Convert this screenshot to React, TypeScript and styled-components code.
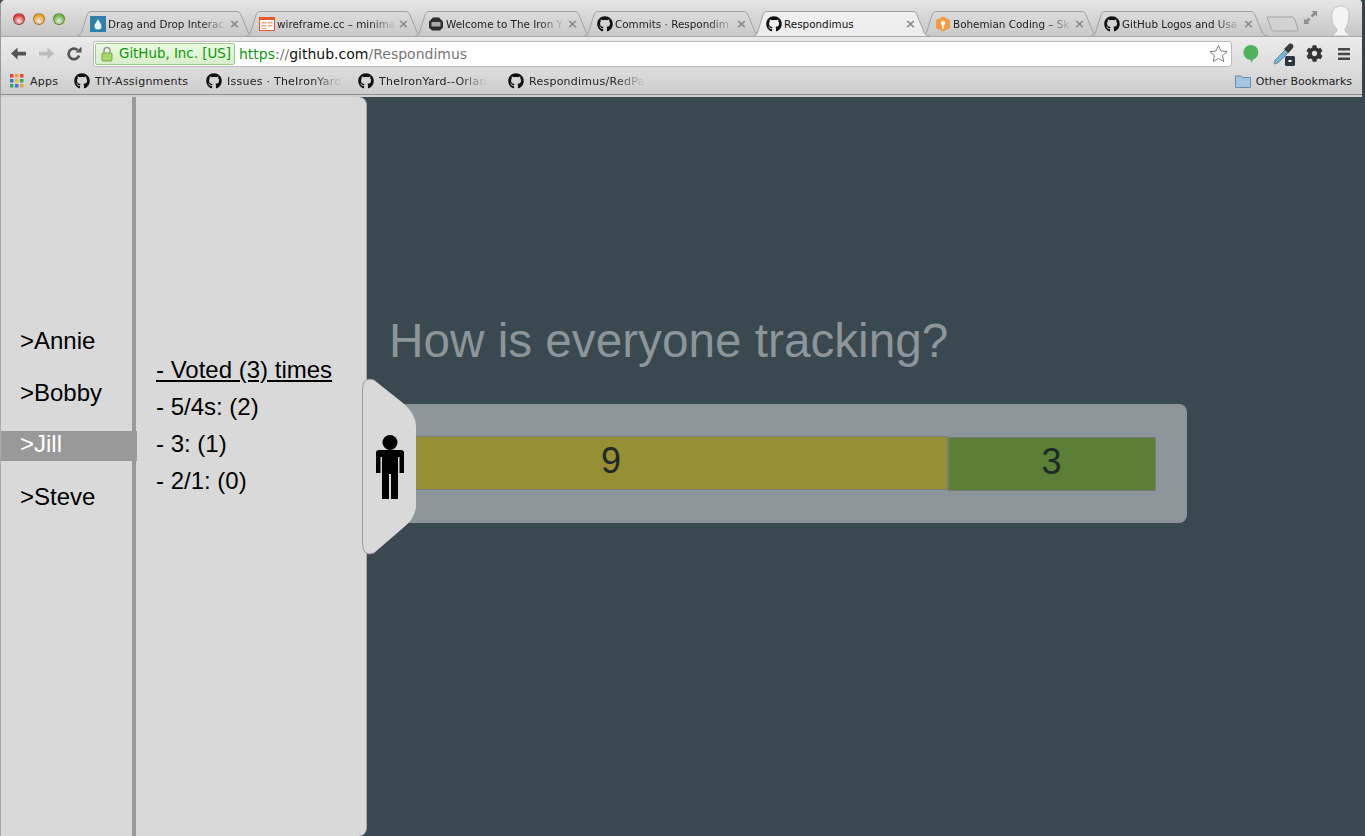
import React from 'react';
import styled, { createGlobalStyle } from 'styled-components';
import { FaGithub, FaCog } from 'react-icons/fa';

const GlobalStyle = createGlobalStyle`
  html, body {
    margin: 0;
    padding: 0;
    height: 100%;
    background: #3a4850;
    overflow: hidden;
  }
  * {
    box-sizing: border-box;
  }
`;

const Window = styled.div`
  width: 1365px;
  height: 836px;
  display: flex;
  flex-direction: column;
  overflow: hidden;
`;

const Browser = styled.header`
  height: 97px;
  flex: none;
  font-family: 'DejaVu Sans', sans-serif;
  font-size: 11px;
  color: #222;
  background: #d4d4d4;
  border-right: 3px solid #3a4048;
  border-left: 1px solid #9a9a9a;
  border-top-left-radius: 5px;
  border-top-right-radius: 5px;
`;

const TabStrip = styled.div`
  height: 36px;
  display: flex;
  align-items: flex-end;
  padding-left: 75px;
  background: linear-gradient(#e6e6e6, #c6c6c6);
  border-top-left-radius: 5px;
  border-top-right-radius: 5px;
  position: relative;
`;

const Lights = styled.div`
  position: absolute;
  left: 12px;
  top: 13px;
  display: flex;
  gap: 8px;
`;

const Light = styled.span<{ $color: string }>`
  width: 12px;
  height: 12px;
  border-radius: 50%;
  border: 1px solid rgba(0, 0, 0, 0.28);
  background: radial-gradient(circle at 50% 70%, #fff8 0, ${p => p.$color} 65%);
`;

const TabItem = styled.div<{ $active?: boolean }>`
  position: relative;
  width: 179px;
  height: 25px;
  margin-right: -10px;
  padding: 0 28px 0 14px;
  display: flex;
  align-items: center;
  gap: 2px;
  white-space: nowrap;
  font-size: 10.4px;
  z-index: ${p => (p.$active ? 3 : 1)};
  color: ${p => (p.$active ? '#111' : '#222')};
`;

const TabShape = styled.svg`
  position: absolute;
  inset: 0;
  width: 100%;
  height: 100%;
`;

const TabLabel = styled.span<{ $fade?: boolean }>`
  position: relative;
  flex: 1;
  padding-top: 1px;
  ${p =>
    p.$fade &&
    'mask-image: linear-gradient(to right, #000 78%, transparent 100%);'}
`;

const TabClose = styled.span`
  position: absolute;
  right: 15px;
  top: 5px;
  font-size: 13px;
  font-weight: 700;
  color: #8a8a8a;
`;

const IconSlot = styled.span`
  position: relative;
  width: 16px;
  height: 16px;
  flex: none;
  display: flex;
  font-size: 16px;
  color: #111;
`;

const NewTab = styled.svg`
  width: 33px;
  height: 16px;
  margin-left: 7px;
  margin-bottom: 4px;
  flex: none;
`;

const WindowExtras = styled.div`
  position: absolute;
  right: 10px;
  top: 5px;
  display: flex;
  align-items: flex-start;
  gap: 10px;
`;

const Toolbar = styled.div`
  height: 32px;
  display: flex;
  align-items: center;
  padding: 2px 0 0 7px;
  background: linear-gradient(#ebebeb, #dddddd);
  border-top: 1px solid #a8a8a8;
`;

const NavButton = styled.span`
  width: 20px;
  height: 20px;
  margin-right: 8px;
  display: flex;
  align-items: center;
  justify-content: center;
`;

const Omnibox = styled.div`
  width: 1139px;
  height: 26px;
  margin-left: 1px;
  display: flex;
  align-items: center;
  padding: 1px;
  background: #fff;
  border: 1px solid #bcbcbc;
  border-radius: 3px;
  font-size: 14px;
`;

const SecureChip = styled.div`
  width: 140px;
  height: 22px;
  flex: none;
  display: flex;
  align-items: center;
  gap: 6px;
  padding-left: 5px;
  font-size: 13.4px;
  white-space: nowrap;
  color: #0a9a0a;
  background: linear-gradient(#ecf8e4, #d8efca);
  border: 1px solid #9ccc88;
  border-radius: 2px;
`;

const Url = styled.div`
  flex: 1;
  padding-left: 4px;
  white-space: nowrap;
  color: #777;
`;

const UrlScheme = styled.span`
  color: #0a9a0a;
`;

const UrlHost = styled.span`
  color: #111;
`;

const ToolIcons = styled.div`
  display: flex;
  align-items: center;
  padding-left: 9px;
  gap: 10px;
`;

const ToolIcon = styled.span<{ $spaced?: boolean }>`
  width: 20px;
  height: 22px;
  margin-right: ${p => (p.$spaced ? '3px' : '0')};
  display: flex;
  align-items: center;
  justify-content: center;
  color: #333;
  font-size: 16px;
`;

const Bookmarks = styled.div`
  height: 27px;
  display: flex;
  align-items: center;
  padding-left: 9px;
  background: linear-gradient(#dddddd, #cdcdcd);
  border-bottom: 1px solid #8f8f8f;
  box-shadow: 0 2px 0 #d0d0d0;
`;

const Bookmark = styled.div<{ $width: number; $gap?: number }>`
  width: ${p => p.$width}px;
  flex: none;
  display: flex;
  align-items: center;
  gap: ${p => p.$gap ?? 5}px;
  white-space: nowrap;
`;

const BookmarkLabel = styled.span<{ $fade?: boolean }>`
  flex: none;
  letter-spacing: 0.25px;
  ${p =>
    p.$fade &&
    'mask-image: linear-gradient(to right, #000 75%, transparent 100%);'}
`;

const BookmarkSpacer = styled.div`
  flex: 1;
`;

const OtherBookmarks = styled.div`
  display: flex;
  align-items: center;
  gap: 5px;
  padding-right: 10px;
  white-space: nowrap;
`;

const Page = styled.main`
  flex: 1;
  display: flex;
  background: #3a4850;
  font-family: 'Liberation Sans', Arial, sans-serif;
  min-height: 0;
`;

const PeopleColumn = styled.nav`
  width: 136px;
  flex: none;
  padding-top: 230px;
  background: #d9d9d9;
  border-right: 4px solid #999;
  border-left: 1px solid #aaa;
  position: relative;
  z-index: 3;
`;

const Person = styled.div<{ $selected?: boolean }>`
  height: 30px;
  width: ${p => (p.$selected ? '136px' : 'auto')};
  margin-bottom: 22px;
  padding-left: 19px;
  font-size: 24px;
  line-height: ${p => (p.$selected ? '26px' : '28px')};
  color: ${p => (p.$selected ? '#fff' : '#000')};
  background: ${p => (p.$selected ? '#999' : 'transparent')};
`;

const DetailColumn = styled.section`
  position: relative;
  width: 231px;
  flex: none;
  padding: 254px 0 0 20px;
  background: #d9d9d9;
  border-right: 1px solid #aaa;
  border-radius: 0 8px 8px 0;
  z-index: 2;
`;

const DetailLine = styled.div<{ $head?: boolean }>`
  font-size: 24px;
  line-height: 37px;
  color: #000;
  text-decoration: ${p => (p.$head ? 'underline' : 'none')};
`;

const Handle = styled.svg`
  position: absolute;
  top: 281px;
  left: 226px;
  width: 55px;
  height: 178px;
`;

const Content = styled.div`
  flex: 1;
  padding: 217px 0 0 22px;
  min-width: 0;
`;

const Question = styled.h1`
  margin: 0 0 36px;
  font-size: 47.7px;
  line-height: 54px;
  font-weight: 400;
  color: #8c9599;
  white-space: nowrap;
`;

const ChartCard = styled.div`
  width: 913px;
  height: 119px;
  margin-left: -115px;
  padding: 33px 0 0 1px;
  display: flex;
  align-items: flex-start;
  background: #8c9599;
  border-radius: 8px;
`;

const Segment = styled.div<{ $color: string; $width: number; $raised?: boolean }>`
  width: ${p => p.$width}px;
  height: 54px;
  margin-top: ${p => (p.$raised ? '-1px' : '0')};
  padding: 0 1px 5px 0;
  display: flex;
  align-items: center;
  justify-content: center;
  font-size: 36px;
  color: #20282c;
  background: ${p => p.$color};
  border: 1px solid #767d74;
`;

const tabs = [
  { title: 'Drag and Drop Interac', icon: 'drop' },
  { title: 'wireframe.cc – minima', icon: 'wire' },
  { title: 'Welcome to The Iron Y', icon: 'iron' },
  { title: 'Commits · Respondim', icon: 'github' },
  { title: 'Respondimus', icon: 'github', active: true },
  { title: 'Bohemian Coding – Sk', icon: 'bohemian' },
  { title: 'GitHub Logos and Usa', icon: 'github' },
];

const bookmarks = [
  { title: 'TIY-Assignments', width: 132 },
  { title: 'Issues · TheIronYard', width: 152, fade: true },
  { title: 'TheIronYard--Orlan', width: 150, fade: true },
  { title: 'Respondimus/RedPa', width: 150, fade: true },
];

const people = ['Annie', 'Bobby', 'Jill', 'Steve'];

const Favicon: React.FC<{ kind: string }> = ({ kind }) => {
  if (kind === 'github') return <FaGithub />;
  if (kind === 'drop') {
    return (
      <svg viewBox="0 0 16 16" width="16" height="16">
        <rect width="16" height="16" fill="#2f7fa8" />
        <path d="M8 3 C9 6 11.5 7.5 11.5 10 A3.5 3.5 0 0 1 4.5 10 C4.5 7.5 7 6 8 3Z" fill="#e8f4fa" />
      </svg>
    );
  }
  if (kind === 'wire') {
    return (
      <svg viewBox="0 0 16 16" width="16" height="16">
        <rect x="0.5" y="1.5" width="15" height="13" fill="#fff" stroke="#e8562a" />
        <rect x="1" y="2" width="14" height="2" fill="#e8562a" />
        <path d="M2.5 6h5v1.5h-5zM2.5 9h5v1.5h-5zM2.5 12h5v1h-5zM9 6h4.5v1.5H9zM9 9h4.5v1.5H9z" fill="#f3a184" />
      </svg>
    );
  }
  if (kind === 'iron') {
    return (
      <svg viewBox="0 0 16 16" width="16" height="16">
        <path d="M5 1.5h6l4 4v6l-3 3H4l-3-3v-6z" fill="#2c2c2c" />
        <rect x="3.5" y="6" width="9" height="4.5" fill="#aaa" />
      </svg>
    );
  }
  return (
    <svg viewBox="0 0 16 16" width="16" height="16">
      <path d="M8 0.5 L15 4 V12 L8 15.5 L1 12 V4Z" fill="#f39a45" />
      <circle cx="8" cy="7" r="2.2" fill="#fff" />
      <rect x="7.2" y="8" width="1.6" height="5" fill="#fff" />
    </svg>
  );
};

const Tab: React.FC<{ title: string; icon: string; active?: boolean }> = ({ title, icon, active }) => (
  <TabItem $active={active}>
    <TabShape viewBox="0 0 179 25" preserveAspectRatio="none">
      <defs>
        <linearGradient id={active ? 'tabOn' : 'tabOff'} x1="0" y1="0" x2="0" y2="1">
          <stop offset="0" stopColor={active ? '#f0f0f0' : '#dcdcdc'} />
          <stop offset="1" stopColor={active ? '#ececec' : '#c9c9c9'} />
        </linearGradient>
      </defs>
      <path
        d="M1 25 C4 25 5 23 6 20 L11 4 C12 1 13 0.5 16 0.5 H160 C163 0.5 164 1 165 4 L172 21 C173 24 175 25 178 25"
        fill={`url(#${active ? 'tabOn' : 'tabOff'})`}
        stroke="#a2a2a2"
      />
    </TabShape>
    <IconSlot>
      <Favicon kind={icon} />
    </IconSlot>
    <TabLabel $fade={!active}>{title}</TabLabel>
    <TabClose>×</TabClose>
  </TabItem>
);

const Octocat = () => (
  <IconSlot>
    <FaGithub />
  </IconSlot>
);

const App: React.FC = () => (
  <Window>
    <GlobalStyle />
    <Browser>
      <TabStrip>
        <Lights>
          <Light $color="#e2403c" />
          <Light $color="#e8a22c" />
          <Light $color="#6fb844" />
        </Lights>
        {tabs.map(tab => (
          <Tab key={tab.title} {...tab} />
        ))}
        <NewTab viewBox="0 0 33 16">
          <path d="M1 1 H26 C28 1 28 2 29 4 L32 13 C32 15 31 15 29 15 H8 C6 15 6 14 5 12Z" fill="#d2d2d2" stroke="#a4a4a4" />
        </NewTab>
        <WindowExtras>
          <svg viewBox="0 0 16 16" width="15" height="15" style={{ marginTop: 5 }}>
            <path d="M9 1h6v6l-2-2-3 3-2-2 3-3zM7 15H1V9l2 2 3-3 2 2-3 3z" fill="#8d8d8d" />
          </svg>
          <svg viewBox="0 0 24 31" width="24" height="31">
            <path d="M4 31 C7 28 9 27 9 24 C5 21 3 15 4 8 C5 3 9 1 13 1 C18 1 21 4 21 9 C21 15 20 20 17 24 C17 27 19 29 23 31Z" fill="#f4f4f4" stroke="#c2c2c2" />
          </svg>
        </WindowExtras>
      </TabStrip>
      <Toolbar>
        <NavButton>
          <svg viewBox="0 0 18 16" width="17" height="15">
            <path d="M1 8 L8 1.5 V6 H17 V10 H8 V14.5Z" fill="#555" />
          </svg>
        </NavButton>
        <NavButton>
          <svg viewBox="0 0 18 16" width="17" height="15">
            <path d="M17 8 L10 1.5 V6 H1 V10 H10 V14.5Z" fill="#bcbcbc" />
          </svg>
        </NavButton>
        <NavButton>
          <svg viewBox="0 0 16 16" width="16" height="16">
            <path d="M13 9.5 A5.3 5.3 0 1 1 11.5 4" fill="none" stroke="#555" strokeWidth="2.6" />
            <path d="M9.5 6.5 H15.5 V0.5Z" fill="#555" />
          </svg>
        </NavButton>
        <Omnibox>
          <SecureChip>
            <svg viewBox="0 0 12 16" width="12" height="16">
              <path d="M3 7 V4.5 A3 3 0 0 1 9 4.5 V7" fill="none" stroke="#9a9a9a" strokeWidth="1.6" />
              <rect x="1" y="7" width="10" height="8" rx="1" fill="#a6d86e" stroke="#78a850" />
            </svg>
            GitHub, Inc. [US]
          </SecureChip>
          <Url>
            <UrlScheme>https</UrlScheme>://<UrlHost>github.com</UrlHost>/Respondimus
          </Url>
          <svg viewBox="0 0 20 20" width="19" height="19" style={{ marginRight: 2 }}>
            <path d="M10 1.5 L12.6 7.4 L19 8 L14.2 12.2 L15.6 18.5 L10 15.2 L4.4 18.5 L5.8 12.2 L1 8 L7.4 7.4Z" fill="#fff" stroke="#777" />
          </svg>
        </Omnibox>
        <ToolIcons>
          <ToolIcon $spaced>
            <svg viewBox="0 0 16 20" width="16" height="20">
              <path d="M8 1 A7.4 7.4 0 0 1 10 15.5 L8.5 19 L7.5 15.8 A7.4 7.4 0 0 1 8 1Z" fill="#4eb25f" />
            </svg>
          </ToolIcon>
          <ToolIcon>
            <svg viewBox="0 0 24 24" width="24" height="24" style={{ flex: 'none' }}>
              <path d="M2 22 L3 18 L13 8 L16 11 L6 21Z" fill="#6cb4e0" stroke="#8a8a8a" />
              <path d="M12 7 L16 3 C17 1 20 1 21 3 C22 5 21 6 20 7 L16.500 11Z" fill="#3c3c3c" />
              <rect x="13" y="14" width="10" height="10" rx="1.5" fill="#2a3640" />
              <rect x="16.500" y="18" width="3" height="2" fill="#fff" />
            </svg>
          </ToolIcon>
          <ToolIcon>
            <FaCog size={17} />
          </ToolIcon>
          <ToolIcon>
            <svg viewBox="0 0 14 14" width="14" height="14">
              <path d="M1 1h12v2.4H1zM1 5.800h12v2.400H1zM1 10.600h12V13H1z" fill="#444" />
            </svg>
          </ToolIcon>
        </ToolIcons>
      </Toolbar>
      <Bookmarks>
        <Bookmark $width={64} $gap={6}>
          <svg viewBox="0 0 14 14" width="14" height="14" style={{ flex: 'none' }}>
            <path d="M0 0h3.500v3.500H0z" fill="#e0483c" />
            <path d="M5 0h3.500v3.500H5z" fill="#e8a02c" />
            <path d="M10 0h3.500v3.500H10z" fill="#e0483c" />
            <path d="M0 5h3.500v3.500H0z" fill="#3c78d8" />
            <path d="M5 5h3.500v3.500H5z" fill="#e8c02c" />
            <path d="M10 5h3.500v3.500H10z" fill="#3aa757" />
            <path d="M0 10h3.500v3.500H0z" fill="#3aa757" />
            <path d="M5 10h3.500v3.500H5z" fill="#3c78d8" />
            <path d="M10 10h3.500v3.500H10z" fill="#e8a02c" />
          </svg>
          <BookmarkLabel>Apps</BookmarkLabel>
        </Bookmark>
        {bookmarks.map(item => (
          <Bookmark key={item.title} $width={item.width}>
            <Octocat />
            <BookmarkLabel $fade={item.fade}>{item.title}</BookmarkLabel>
          </Bookmark>
        ))}
        <BookmarkSpacer />
        <OtherBookmarks>
          <svg viewBox="0 0 16 13" width="16" height="13">
            <path d="M0.500 12.500 V1 H6 L7 2.500 H15.500 V12.500Z" fill="#a4c6e4" stroke="#6d8ea8" />
          </svg>
          Other Bookmarks
        </OtherBookmarks>
      </Bookmarks>
    </Browser>
    <Page>
      <PeopleColumn>
        {people.map(name => (
          <Person key={name} $selected={name === 'Jill'}>
            &gt;{name}
          </Person>
        ))}
      </PeopleColumn>
      <DetailColumn>
        <DetailLine $head>- Voted (3) times</DetailLine>
        <DetailLine>- 5/4s: (2)</DetailLine>
        <DetailLine>- 3: (1)</DetailLine>
        <DetailLine>- 2/1: (0)</DetailLine>
        <Handle viewBox="0 0 55 178">
          <path
            d="M0.500 12 Q0.500 -2 12 2 L41 25 Q54 36 54 48 V127 Q54 140 41 150 L12 175 Q0.500 179 0.500 165Z"
            fill="#d9d9d9"
          />
          <path d="M12 2 Q0.500 -2 0.500 12 V165 Q0.500 179 12 175" fill="none" stroke="#999" />
          <circle cx="28" cy="64.500" r="7.500" fill="#000" />
          <path
            d="M17 72 H39 Q42 72 42 75 V95 H37.500 V79 H36 V121 H29 V96 H27 V121 H20 V79 H18.500 V95 H14 V75 Q14 72 17 72Z"
            fill="#000"
          />
        </Handle>
      </DetailColumn>
      <Content>
        <Question>How is everyone tracking?</Question>
        <ChartCard>
          <Segment $color="#968f33" $width={673} $raised>
            9
          </Segment>
          <Segment $color="#5a7f35" $width={208}>
            3
          </Segment>
        </ChartCard>
      </Content>
    </Page>
  </Window>
);

export default App;
